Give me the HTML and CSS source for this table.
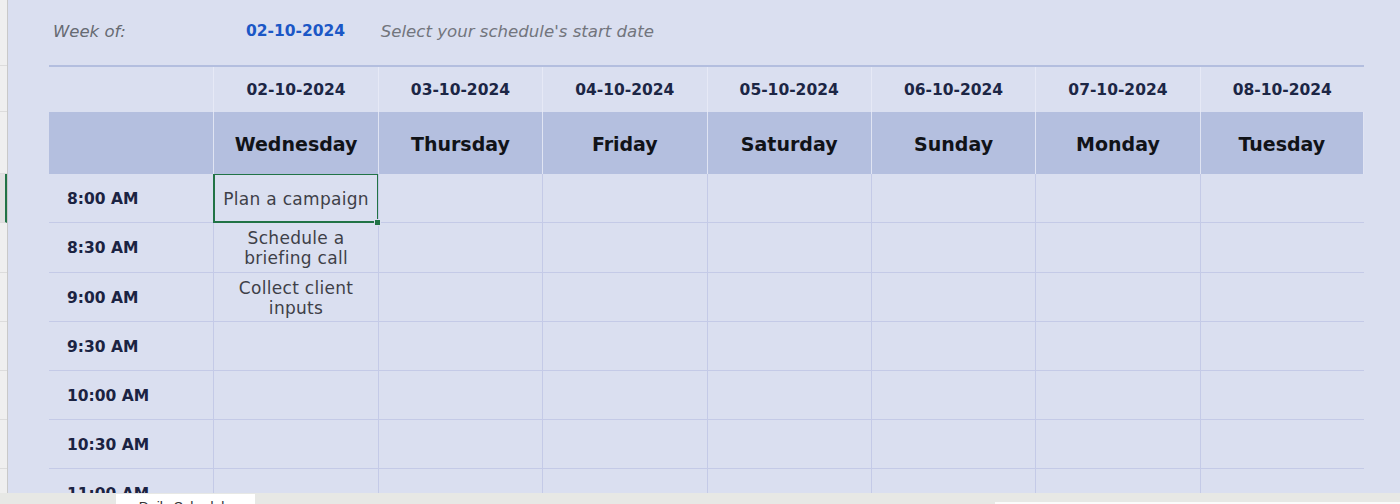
FILE: index.html
```html
<!DOCTYPE html>
<html>
<head>
<meta charset="utf-8">
<link rel="stylesheet" href="styles.css">
</head>
<body>
<div class="main">
  <div class="gutter">
    <div class="gh" style="height:66px"></div>
    <div class="gh" style="height:46px"></div>
    <div class="gh" style="height:62px"></div>
    <div class="gh sel" style="height:49px"></div>
    <div class="gh" style="height:50px"></div>
    <div class="gh" style="height:49px"></div>
    <div class="gh" style="height:49px"></div>
    <div class="gh" style="height:49px"></div>
    <div class="gh" style="height:49px"></div>
    <div class="gh" style="height:49px"></div>
  </div>
  <div class="sheet">
    <div class="weekbar">
      <div class="wk-label">Week of:</div>
      <div class="wk-date">02-10-2024</div>
      <div class="wk-hint">Select your schedule's start date</div>
    </div>
    <div class="table">
      <div class="dcell first"></div>
      <div class="dcell">02-10-2024</div>
      <div class="dcell">03-10-2024</div>
      <div class="dcell">04-10-2024</div>
      <div class="dcell">05-10-2024</div>
      <div class="dcell">06-10-2024</div>
      <div class="dcell">07-10-2024</div>
      <div class="dcell last">08-10-2024</div>

      <div class="day first"></div>
      <div class="day">Wednesday</div>
      <div class="day">Thursday</div>
      <div class="day">Friday</div>
      <div class="day">Saturday</div>
      <div class="day">Sunday</div>
      <div class="day">Monday</div>
      <div class="day last">Tuesday</div>

      <div class="time r1">8:00 AM</div>
      <div class="cell r1 selected">Plan a campaign<span class="handle"></span></div>
      <div class="cell r1"></div><div class="cell r1"></div><div class="cell r1"></div><div class="cell r1"></div><div class="cell r1"></div><div class="cell r1"></div>

      <div class="time r2">8:30 AM</div>
      <div class="cell r2">Schedule a<br>briefing call</div>
      <div class="cell r2"></div><div class="cell r2"></div><div class="cell r2"></div><div class="cell r2"></div><div class="cell r2"></div><div class="cell r2"></div>

      <div class="time">9:00 AM</div>
      <div class="cell">Collect client<br>inputs</div>
      <div class="cell"></div><div class="cell"></div><div class="cell"></div><div class="cell"></div><div class="cell"></div><div class="cell"></div>

      <div class="time">9:30 AM</div>
      <div class="cell"></div><div class="cell"></div><div class="cell"></div><div class="cell"></div><div class="cell"></div><div class="cell"></div><div class="cell"></div>

      <div class="time">10:00 AM</div>
      <div class="cell"></div><div class="cell"></div><div class="cell"></div><div class="cell"></div><div class="cell"></div><div class="cell"></div><div class="cell"></div>

      <div class="time">10:30 AM</div>
      <div class="cell"></div><div class="cell"></div><div class="cell"></div><div class="cell"></div><div class="cell"></div><div class="cell"></div><div class="cell"></div>

      <div class="time">11:00 AM</div>
      <div class="cell"></div><div class="cell"></div><div class="cell"></div><div class="cell"></div><div class="cell"></div><div class="cell"></div><div class="cell"></div>
    </div>
  </div>
</div>
<div class="tabbar">
  <div class="tab-spacer"></div>
  <div class="tab">Daily Schedule</div>
  <div class="tab-gap"></div>
  <div class="scroll"></div>
</div>
</body>
</html>
```
FILE: styles.css
```css
html, body {
  margin: 0;
  padding: 0;
}
body {
  width: 1400px;
  height: 504px;
  overflow: hidden;
  display: flex;
  flex-direction: column;
  font-family: "DejaVu Sans", "Liberation Sans", sans-serif;
  background: #dadff0;
}
.main {
  flex: 1;
  min-height: 0;
  display: flex;
  overflow: hidden;
}
.gutter {
  width: 7px;
  flex: none;
  background: #efefef;
  border-right: 1px solid #c9c9c9;
  display: flex;
  flex-direction: column;
}
.gh {
  flex: none;
  border-bottom: 1px solid #dcdcdc;
  box-sizing: border-box;
}
.gh.sel {
  background: #e1e1e1;
  border-right: 2px solid #217346;
}
.sheet {
  flex: 1;
  padding-left: 41px;
  background: #dadff0;
}
.weekbar {
  width: 1315px;
  height: 65px;
  display: grid;
  grid-template-columns: repeat(8, 1fr);
  align-items: center;
  padding-bottom: 3px;
  box-sizing: border-box;
}
.wk-label {
  font-style: italic;
  font-size: 16.5px;
  color: #666a72;
  padding-left: 4px;
}
.wk-date {
  text-align: center;
  font-weight: bold;
  font-size: 15.5px;
  color: #1b57c6;
}
.wk-hint {
  grid-column: 3 / span 6;
  padding-left: 3px;
  font-style: italic;
  font-size: 16.6px;
  color: #72757d;
}
.table {
  width: 1315px;
  display: grid;
  grid-template-columns: repeat(8, 1fr);
  border-top: 2px solid #b3bedf;
}
.dcell {
  height: 45px;
  display: flex;
  align-items: center;
  justify-content: center;
  font-weight: bold;
  font-size: 15.5px;
  color: #1c2645;
  border-left: 1px solid #e6e9f6;
  padding-top: 1px;
  box-sizing: border-box;
}
.dcell.first, .day.first {
  border-left: none;
}
.day {
  height: 62px;
  background: #b4bfdf;
  display: flex;
  align-items: center;
  justify-content: center;
  font-weight: bold;
  font-size: 19px;
  color: #111318;
  border-left: 1px solid #e0e4f3;
  padding-top: 1px;
  box-sizing: border-box;
}
.day.last {
  border-right: 1px solid #e0e4f3;
}
.time {
  height: 49px;
  box-sizing: border-box;
  border-bottom: 1px solid #c4cae7;
  display: flex;
  align-items: center;
  padding-left: 18px;
  padding-top: 1px;
  font-weight: bold;
  font-size: 15.5px;
  color: #1b2342;
}
.cell {
  position: relative;
  height: 49px;
  box-sizing: border-box;
  border-bottom: 1px solid #c4cae7;
  border-left: 1px solid #c4cae7;
  display: flex;
  align-items: center;
  justify-content: center;
  text-align: center;
  font-size: 17px;
  letter-spacing: 0.3px;
  line-height: 20px;
  padding-top: 1px;
  color: #3e4048;
}
.r1 {
  height: 49px;
}
.r2 {
  height: 50px;
}
.cell.selected {
  box-shadow: inset 0 0 0 1px #217346;
  border-left-color: #217346;
  border-bottom-color: #217346;
}
.handle {
  position: absolute;
  right: -3px;
  bottom: -4px;
  width: 5px;
  height: 5px;
  background: #217346;
  border: 1px solid #dadff0;
  box-sizing: content-box;
  z-index: 2;
}
.tabbar {
  height: 11px;
  flex: none;
  background: #e7e8e5;
  display: flex;
}
.tab-spacer {
  width: 116px;
}
.tab {
  width: 139px;
  margin-top: 1px;
  background: #ffffff;
  font-family: "Liberation Sans", sans-serif;
  font-size: 14px;
  color: #333;
  text-align: center;
  padding-top: 5px;
  line-height: 16px;
  overflow: hidden;
  box-sizing: border-box;
}
.tab-gap {
  width: 740px;
}
.scroll {
  flex: 1;
  margin-top: 9px;
  background: #fbfbfb;
}
```
